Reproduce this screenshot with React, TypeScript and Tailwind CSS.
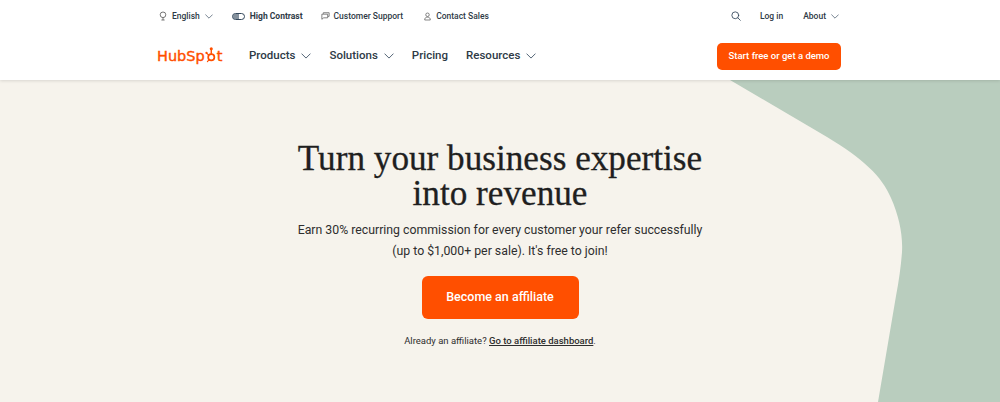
import React from "react";

const Chevron = ({ className = "" }: { className?: string }) => (
  <svg viewBox="0 0 12 7" className={className} fill="none" stroke="#33475b" strokeWidth="1" strokeLinecap="round" strokeLinejoin="round">
    <path d="M1 1l5 5 5-5" />
  </svg>
);

const Sprocket = () => (
  <svg viewBox="0 0 14 22" className="w-[11px] h-[17px] mx-[0.5px] -mt-[4px]" fill="none" stroke="#ff4f00" strokeLinecap="round">
    <circle cx="8" cy="14.5" r="4" strokeWidth="2.2" />
    <path d="M8 10V5" strokeWidth="1.8" />
    <circle cx="8" cy="3.5" r="2" fill="#ff4f00" stroke="none" />
    <path d="M4.8 11.8L2 9.4" strokeWidth="1.5" />
    <circle cx="1.8" cy="9" r="1.5" fill="#ff4f00" stroke="none" />
    <path d="M5 18l-2 2.2" strokeWidth="1.5" />
  </svg>
);

const font = { fontFamily: 'Roboto, "Noto Sans", sans-serif' };

export default function App() {
  return (
    <div className="relative w-[1000px] h-[402px] overflow-hidden bg-white" style={font}>
      <header className="relative z-10 h-[80px] bg-white shadow-[0_1px_3px_rgba(0,0,0,0.12)] text-[#2e3a46]">
        <div className="h-[32px] pl-[159px] pr-[161px] flex items-center text-[8.5px] font-medium">
          <div className="flex items-center">
            <svg viewBox="0 0 10 12" className="w-[8px] h-[10px]" fill="none" stroke="#555" strokeWidth="1">
              <circle cx="5" cy="4.5" r="3.5" />
              <path d="M5 8v3M3 11h4" />
            </svg>
            <span className="ml-[5px]">English</span>
            <Chevron className="w-[8px] h-[5px] ml-[5px]" />
          </div>
          <div className="flex items-center ml-[19px]">
            <div className="w-[13px] h-[7px] rounded-full border border-[#33475b] flex items-center justify-start overflow-hidden">
              <div className="w-[6px] h-full bg-[#33475b]/60" />
            </div>
            <span className="ml-[5px] font-bold">High Contrast</span>
          </div>
          <div className="flex items-center ml-[18px]">
            <svg viewBox="0 0 12 11" className="w-[9px] h-[8px]" fill="none" stroke="#555" strokeWidth="1">
              <path d="M3 2.5V1h8v5H9.5M1 3h8v5H3.5L1 10z" />
            </svg>
            <span className="ml-[4px]">Customer Support</span>
          </div>
          <div className="flex items-center ml-[21px]">
            <svg viewBox="0 0 10 12" className="w-[7px] h-[9px]" fill="none" stroke="#555" strokeWidth="1">
              <circle cx="5" cy="3.5" r="2.5" />
              <path d="M1 11c0-3 1.5-4 4-4s4 1 4 4z" />
            </svg>
            <span className="ml-[5px]">Contact Sales</span>
          </div>
          <div className="ml-auto flex items-center">
            <svg viewBox="0 0 14 14" className="w-[10px] h-[10px]" fill="none" stroke="#33475b" strokeWidth="1.2" strokeLinecap="round">
              <circle cx="6" cy="6" r="4.8" />
              <path d="M9.6 9.6L13 13" />
            </svg>
            <span className="ml-[19px]">Log in</span>
            <span className="ml-[20px]">About</span>
            <Chevron className="w-[8px] h-[5px] ml-[5px]" />
          </div>
        </div>
        <div className="h-[48px] pl-[157px] pr-[159px] flex items-center">
          <div
            className="flex items-center w-[92px] text-[#ff4f00] text-[14.5px] leading-none [-webkit-text-stroke:0.4px_#ff4f00]"
            style={{ fontFamily: '"DejaVu Sans", sans-serif' }}
          >
            <span>HubSp</span>
            <Sprocket />
            <span>t</span>
          </div>
          <nav className="flex items-center text-[11.5px] font-medium text-[#2e3a46]">
            <span>Products</span>
            <Chevron className="w-[10px] h-[6px] ml-[6px]" />
            <span className="ml-[18px]">Solutions</span>
            <Chevron className="w-[10px] h-[6px] ml-[6px]" />
            <span className="ml-[18px]">Pricing</span>
            <span className="ml-[18px]">Resources</span>
            <Chevron className="w-[10px] h-[6px] ml-[6px]" />
          </nav>
          <button className="ml-auto w-[124px] h-[27px] rounded-[5px] bg-[#ff4f00] text-white text-[9.5px] font-medium">
            Start free or get a demo
          </button>
        </div>
      </header>

      <main className="relative h-[322px] bg-[#b9cdbe]">
        <svg className="absolute inset-0 w-full h-full" viewBox="0 0 1000 322" preserveAspectRatio="none">
          <path
            d="M0 0H730L827 57C862 78 882 96 891 118C899 136 903 155 902 172C901 186 899 200 896 216L878 322H0Z"
            fill="#f6f3ec"
          />
        </svg>
        <div className="relative flex flex-col items-center pt-[61px] text-[#1f1f1f]">
          <h1
            className="w-[440px] text-center text-[35.2px] leading-[35px] font-normal [-webkit-text-stroke:0.3px_#1f1f1f]"
            style={{ fontFamily: '"Liberation Serif", serif' }}
          >
            Turn your business expertise into revenue
          </h1>
          <p className="w-[420px] mt-[9px] text-center text-[12.3px] leading-[21px] text-[#2e2e2e]">
            Earn 30% recurring commission for every customer your refer successfully (up to $1,000+ per sale). It's free to join!
          </p>
          <button className="w-[157px] h-[43px] mt-[14px] rounded-[6px] bg-[#ff4f00] text-white text-[12.5px] font-medium">
            Become an affiliate
          </button>
          <p className="mt-[15px] text-[9.5px] leading-[14px] text-[#2e2e2e]">
            Already an affiliate? <span className="font-medium underline">Go to affiliate dashboard</span>.
          </p>
        </div>
      </main>
    </div>
  );
}
